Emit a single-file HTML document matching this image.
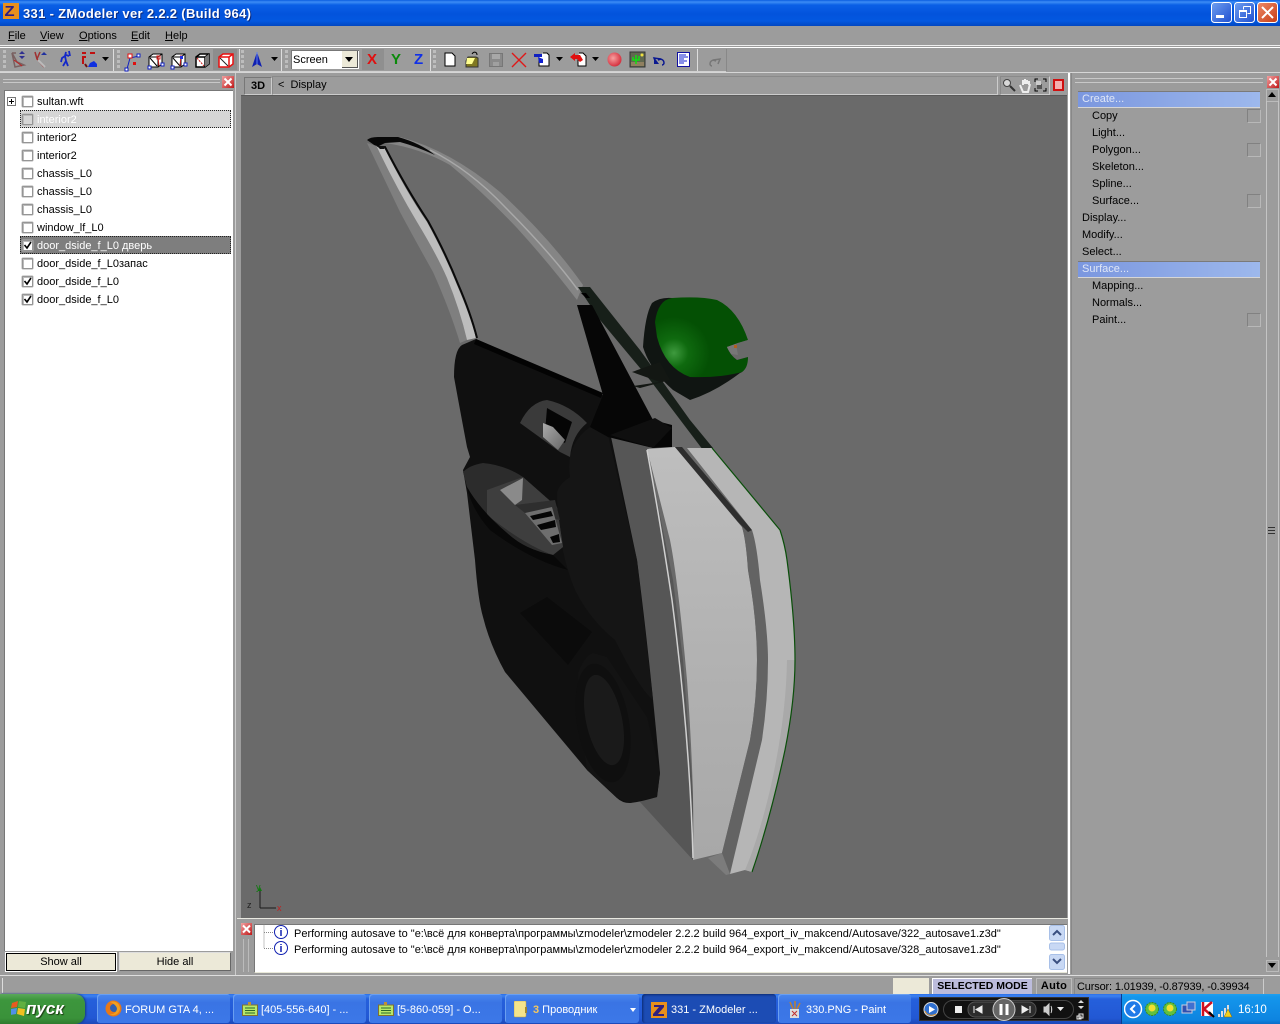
<!DOCTYPE html>
<html><head><meta charset="utf-8"><title>331 - ZModeler</title>
<style>
html,body{margin:0;padding:0;width:1280px;height:1024px;overflow:hidden;background:#9c9c9c}
body{position:relative;font:11px "Liberation Sans","Noto Sans CJK SC",sans-serif;color:#000}
.a{position:absolute}
.t{position:absolute;white-space:nowrap;line-height:14px}
.cb{position:absolute;left:22px;width:9px;height:9px;border:1px solid #959595;box-shadow:inset 1px 1px 0 #bbb,0 0 0 .5px #b0b0b0;border-radius:1px;background:#fff}
.tb{position:absolute;top:994px;height:29px;border-radius:3px;background:linear-gradient(#4a88ee,#3a74e4 30%,#3c78e8);box-shadow:inset 1px 1px 0 #6a9ff0;color:#fff;font-size:11px;line-height:32px;white-space:nowrap}
.hd{position:absolute;left:1078px;width:182px;height:15px;background:linear-gradient(90deg,#7b97df,#9db8ec);border-top:1px solid #7a7a7a;border-bottom:1px solid #d6d6d6;color:#dfe6f6;line-height:15px;text-indent:4px}
.sq{position:absolute;left:1247px;width:12px;height:12px;border:1px solid #818181;border-right-color:#b8b8b8;border-bottom-color:#b8b8b8}
.ln{position:absolute;background:#fff}
.grip{position:absolute;top:50px;width:3px;height:20px;background:repeating-linear-gradient(#bdbdbd 0 3px,transparent 3px 5px)}
</style></head><body>

<!-- title bar -->
<div class="a" style="left:0;top:0;width:1280px;height:26px;background:linear-gradient(#0a5ee0 0,#3d8cf5 2px,#0a5fe6 5px,#0353dc 14px,#0358e0 21px,#0246c0 26px)"></div>
<div class="a" style="left:3px;top:3px;width:16px;height:16px;background:#e8901c"></div>
<div class="t" style="left:5px;top:4px;font:bold 15px/15px 'Liberation Sans',sans-serif;color:#302080;transform:scaleX(1.1)">Z</div>
<div class="t" style="left:23px;top:7px;color:#fff;font-weight:bold;font-size:13px;letter-spacing:.32px;text-shadow:1px 1px 0 #0a2a80">331 - ZModeler ver 2.2.2 (Build 964)</div>
<svg class="a" style="left:1210px;top:1px" width="70" height="24">
<defs><linearGradient id="bl" x1="0" y1="0" x2="1" y2="1"><stop offset="0" stop-color="#6f9ff0"/><stop offset="1" stop-color="#1f4fd0"/></linearGradient>
<linearGradient id="rd" x1="0" y1="0" x2="1" y2="1"><stop offset="0" stop-color="#ec8a68"/><stop offset="1" stop-color="#c83c14"/></linearGradient>
<radialGradient id="ball" cx=".4" cy=".4" r=".7"><stop offset="0" stop-color="#f8a0a0"/><stop offset="1" stop-color="#d02030"/></radialGradient></defs>
<rect x="1.500" y="1.500" width="20" height="20" rx="3" fill="url(#bl)" stroke="#fff"/>
<rect x="6" y="14" width="8" height="3" fill="#fff"/>
<rect x="24.500" y="1.500" width="20" height="20" rx="3" fill="url(#bl)" stroke="#fff"/>
<path d="M33.500 5.500h7v7h-3M33.500 5.500v3M29.500 9.500h7v7h-7z M29.500 10.500h7" fill="none" stroke="#fff"/>
<rect x="47.500" y="1.500" width="20" height="20" rx="3" fill="url(#rd)" stroke="#fff"/>
<path d="M52 6l11 11M63 6L52 17" stroke="#fff" stroke-width="2"/>
</svg>

<!-- menu -->
<div class="t" style="left:8px;top:29px;"><u>F</u>ile</div>
<div class="t" style="left:40px;top:29px;"><u>V</u>iew</div>
<div class="t" style="left:79px;top:29px;"><u>O</u>ptions</div>
<div class="t" style="left:131px;top:29px;"><u>E</u>dit</div>
<div class="t" style="left:165px;top:29px;"><u>H</u>elp</div>
<div class="ln" style="left:0;top:45px;width:1280px;height:1px;background:#eee"></div>
<div class="ln" style="left:0;top:47px;width:1280px;height:1px"></div>

<!-- toolbar -->
<div class="ln" style="left:113px;top:49px;width:1px;height:22px;background:#ddd"></div>
<div class="ln" style="left:239px;top:49px;width:1px;height:22px;background:#ddd"></div>
<div class="ln" style="left:281px;top:49px;width:1px;height:22px;background:#ddd"></div>
<div class="ln" style="left:430px;top:49px;width:1px;height:22px;background:#ddd"></div>
<div class="ln" style="left:697px;top:49px;width:1px;height:22px;background:#ddd"></div>
<div class="ln" style="left:726px;top:49px;width:1px;height:22px;background:#888"></div>
<div class="ln" style="left:0;top:71px;width:726px;height:1px;background:#d0d0d0"></div>
<div class="grip" style="left:3px"></div><div class="grip" style="left:117px"></div><div class="grip" style="left:241px"></div><div class="grip" style="left:285px"></div><div class="grip" style="left:433px"></div>
<div class="a" style="left:213px;top:49px;width:24px;height:21px;background:#8d8d8d"></div>

<div class="a" style="left:291px;top:50px;width:67px;height:18px;background:#fff;border-top:1px solid #777;border-left:1px solid #777"></div>
<div class="t" style="left:293px;top:53px;">Screen</div>
<div class="a" style="left:342px;top:51px;width:15px;height:16px;background:#ece9d8;border-right:1px solid #555;border-bottom:1px solid #555"></div>
<div class="a" style="left:345px;top:57px;border:4px solid transparent;border-top:5px solid #000"></div>
<div class="a" style="left:362px;top:49px;width:22px;height:21px;background:#8f8f8f"></div>
<div class="t" style="left:367px;top:52px;font:bold 15px/15px 'Liberation Sans',sans-serif;color:#e01010">X</div>
<div class="t" style="left:391px;top:52px;font:bold 15px/15px 'Liberation Sans',sans-serif;color:#0a8a0a">Y</div>
<div class="t" style="left:414px;top:52px;font:bold 15px/15px 'Liberation Sans',sans-serif;color:#1030e8">Z</div>

<svg class="a" style="left:0;top:48px" width="730" height="24" fill="none">
<path d="M12 5l5 9 7 3-9 2zM12 5h4" stroke="#7a6060" stroke-width="1.500"/><path d="M19 6h6l-3-3zM19 8h6l-3 3z" fill="#303090"/><path d="M14 12l8 6" stroke="#c02020"/>
<path d="M35 4l2 7 7 8M40 4l-3 7" stroke="#a03030" stroke-width="1.500"/><path d="M41 7h6l-3-3z" fill="#2030a0"/><path d="M38 12l7 7" stroke="#bbb" stroke-width="2"/>
<path d="M66 4l-1 4-3 2-1 4M65 8l1 5-3 5M66 13l2 5M66 7l3 1M69 3l1 5" stroke="#1428c8" stroke-width="1.800"/>
<path d="M82 5h4M82 9h4M83 9v7M90 5h5" stroke="#c01010" stroke-width="2"/><path d="M88 19l2-4 4-2 3 3v3z" fill="#1030e0"/><path d="M85 16l2 3" stroke="#701010" stroke-width="2"/>
<path d="M102 9h7l-3.500 4z" fill="#000"/>
<path d="M127 21l3-11 9-2" stroke="#1020c0"/><rect x="128" y="6" width="4" height="4" fill="#fff" stroke="#e01010"/><rect x="137" y="6" width="3" height="3" fill="#fff" stroke="#1020c0"/><rect x="125" y="20" width="3" height="3" fill="#fff" stroke="#1020c0"/><rect x="133" y="14" width="3" height="3" fill="#e01010"/>
<path d="M149 9l4-3h9v10l-4 3h-9zM149 9h9v10M158 9l4-3M150 10l7 8" fill="#fff" stroke="#000"/><path d="M158 8l1 10" stroke="#d02020"/><rect x="157" y="8" width="3" height="3" stroke="#d02020"/><rect x="161" y="15" width="3" height="3" stroke="#1020c0" fill="#fff"/><rect x="148" y="18" width="3" height="3" stroke="#1020c0" fill="#fff"/>
<path d="M172 9l4-3h9v10l-4 3h-9zM172 9h9v10M181 9l4-3M173 10l7 8" fill="#fff" stroke="#000"/><path d="M181 7l-1 11" stroke="#d02020"/><rect x="180" y="8" width="3" height="3" fill="#2030e0"/><rect x="184" y="15" width="3" height="3" stroke="#1020c0" fill="#fff"/><rect x="171" y="18" width="3" height="3" stroke="#1020c0" fill="#fff"/>
<path d="M196 9l4-3h9v10l-4 3h-9zM196 9h9v10M205 9l4-3" fill="#fff" stroke="#000" stroke-width="1.500"/><path d="M205 9l4-3v10l-4 3z" fill="#777"/><path d="M197 10l7 8" stroke="#d02020" stroke-dasharray="2 1"/>
<path d="M219 9l4-3h10v10l-4 3h-10zM219 9h10v10M229 9l4-3" fill="#fff" stroke="#e81010" stroke-width="1.500"/><path d="M220 10l8 8" stroke="#222"/>
<path d="M252 19l5-15 5 15-5-3z" fill="#1020b0"/><path d="M257 4v12" stroke="#6080f0"/>
<path d="M271 9h7l-3.500 4z" fill="#000"/>
<path d="M445 5h7l3 3v10h-10z" fill="#fff" stroke="#000"/>
<path d="M466 13l2-4h8l2 1v9h-12z" fill="#807820" stroke="#333"/><path d="M467 10h8l-3 6h-6z" fill="#ffff90"/><path d="M472 6c2-3 5-2 5 1" stroke="#000"/>
<rect x="489.500" y="5.500" width="13" height="13" fill="#8a8a8a" stroke="#777"/><rect x="492" y="6" width="8" height="5" fill="#a8a8a8"/><rect x="493" y="14" width="6" height="4" fill="#a0a0a0"/>
<path d="M512 5l14 14M526 5l-14 14" stroke="#e01818" stroke-width="1.400"/>
<path d="M543 5h4l2 2v11h-10v-8" fill="#fff" stroke="#000"/><rect x="534" y="6" width="8" height="3" fill="#1020c0"/><path d="M538 9l5 2v4h-4z" fill="#1020d0"/>
<path d="M556 9h7l-3.500 4z" fill="#000"/>
<path d="M579 5h4l3 3v10h-8v-8" fill="#fff" stroke="#000"/><path d="M570 9l5-4v2h5l3 5-3 2-3-3h-2v2z" fill="#e01010"/>
<path d="M592 9h7l-3.500 4z" fill="#000"/>
<circle cx="614.500" cy="11.500" r="7" fill="url(#ball)"/>
<rect x="630" y="4" width="15" height="15" fill="#606850" stroke="#333"/><path d="M631 14h13v4h-13z" fill="#908060"/><path d="M636 7v9M633 9v3h6v-4" stroke="#10e010" stroke-width="1.500"/><circle cx="642" cy="7" r="1.500" fill="#f0e040"/>
<path d="M656 15l-2-5 7 1-3 1c3-2 6 0 6 3 0 1-1 2-2 2" stroke="#0a1890" stroke-width="1.500"/><path d="M654 9v7h5z" fill="#0a1890"/>
<rect x="677.500" y="4.500" width="12" height="14" fill="#fff" stroke="#1010a0"/><path d="M679 7h7M679 9h9M679 11h5M679 13h8M679 15h5" stroke="#1020d0"/>
<path d="M718 16l2-5-7 1 3 1c-3-2-6 0-6 3 0 1 1 2 2 2" stroke="#777" stroke-width="1.500"/>
</svg>

<!-- left panel -->
<div class="a" style="left:235px;top:73px;width:1px;height:903px;background:#ccc"></div>
<div class="a" style="left:0;top:72px;width:1280px;height:1px;background:#d6d6d6"></div>
<div class="a" style="left:3px;top:79px;width:217px;height:1px;background:#c8c8c8"></div>
<div class="a" style="left:3px;top:82px;width:217px;height:1px;background:#c8c8c8"></div>
<svg class="a" style="left:222px;top:76px" width="12" height="12"><defs><linearGradient id="xb" x1="0" y1="0" x2="1" y2="1"><stop offset="0" stop-color="#f0a0a0"/><stop offset="1" stop-color="#c01818"/></linearGradient></defs><rect width="12" height="12" fill="url(#xb)"/><path d="M2.500 2.500l7 7M9.500 2.500l-7 7" stroke="#fff" stroke-width="2"/></svg>
<div class="a" style="left:4px;top:90px;width:228px;height:860px;background:#fff;border-top:1px solid #777;border-left:1px solid #777"></div>
<div class="a" style="left:7px;top:97px;width:7px;height:7px;border:1px solid #777;background:#fff"></div>
<div class="a" style="left:9px;top:101px;width:5px;height:1px;background:#000"></div>
<div class="a" style="left:11px;top:99px;width:1px;height:5px;background:#000"></div>

<div class="a" style="left:20px;top:110px;width:209px;height:16px;background:#d6d6d6;border:1px dotted #222"></div>
<div class="a" style="left:20px;top:236px;width:209px;height:16px;background:#7e7e7e;border:1px dotted #222"></div>

<div class="cb" style="top:96px"></div><div class="t" style="left:37px;top:95px">sultan.wft</div>
<div class="cb" style="top:114px;background:#d6d6d6"></div><div class="t" style="left:37px;top:113px;color:#fff">interior2</div>
<div class="cb" style="top:132px"></div><div class="t" style="left:37px;top:131px">interior2</div>
<div class="cb" style="top:150px"></div><div class="t" style="left:37px;top:149px">interior2</div>
<div class="cb" style="top:168px"></div><div class="t" style="left:37px;top:167px">chassis_L0</div>
<div class="cb" style="top:186px"></div><div class="t" style="left:37px;top:185px">chassis_L0</div>
<div class="cb" style="top:204px"></div><div class="t" style="left:37px;top:203px">chassis_L0</div>
<div class="cb" style="top:222px"></div><div class="t" style="left:37px;top:221px">window_lf_L0</div>
<div class="cb" style="top:240px"></div><div class="t" style="left:37px;top:239px;color:#fff">door_dside_f_L0 дверь</div>
<div class="cb" style="top:258px"></div><div class="t" style="left:37px;top:257px">door_dside_f_L0запас</div>
<div class="cb" style="top:276px"></div><div class="t" style="left:37px;top:275px">door_dside_f_L0</div>
<div class="cb" style="top:294px"></div><div class="t" style="left:37px;top:293px">door_dside_f_L0</div>
<svg class="a" style="left:22px;top:96px" width="12" height="212" fill="none" stroke="#000" stroke-width="1.600"><path d="M2.500 149l2.500 3 4-6M2.500 185l2.500 3 4-6M2.500 203l2.500 3 4-6"/></svg>

<div class="a" style="left:6px;top:953px;width:108px;height:16px;background:#ece9d8;border:1px solid #000;outline:1px solid #fff;text-align:center;line-height:17px">Show all</div>
<div class="a" style="left:120px;top:953px;width:110px;height:17px;background:#ece9d8;border-right:1px solid #666;border-bottom:1px solid #666;box-shadow:-1px -1px 0 #ddd;text-align:center;line-height:18px">Hide all</div>

<!-- 3D viewport header -->
<div class="a" style="left:244px;top:77px;width:26px;height:16px;border:1px solid #777;border-right-color:#ccc;border-bottom-color:#ccc;text-align:center;font:bold 11px/16px 'Liberation Sans',sans-serif">3D</div>
<div class="a" style="left:272px;top:76px;width:724px;height:17px;border:1px solid #8a8a8a;border-right-color:#ccc;border-bottom-color:#ccc"></div>
<div class="t" style="left:278px;top:78px">&lt;&nbsp; Display</div>
<div class="a" style="left:1000px;top:76px;width:48px;height:17px;border:1px solid #8a8a8a;border-right-color:#ccc;border-bottom-color:#ccc"></div>
<svg class="a" style="left:1000px;top:76px" width="66" height="18" fill="none">
<circle cx="7" cy="7" r="3.500" fill="#d8d8d8" stroke="#444"/><path d="M10 10l5 5" stroke="#333" stroke-width="2"/>
<path d="M20 9l3 7h5l2-8M23 9V4M25 8V3M27 8V4M29 9V5" stroke="#eee" stroke-width="2"/>
<path d="M35 6V3h3M43 3h3v3M35 12v3h3M46 12v3h-3" stroke="#000"/><rect x="37" y="8" width="5" height="5" fill="#555"/><rect x="36" y="5" width="5" height="4" fill="#ccc"/>
<rect x="54" y="4" width="9" height="10" fill="#f4b0b0" stroke="#d01010" stroke-width="2"/>
</svg>

<!-- viewport -->
<div class="a" style="left:241px;top:95px;width:826px;height:822px;background:#6a6a6a;border-top:1px solid #5a5a5a"></div>
<svg class="a" style="left:0;top:0" width="1280" height="1024" viewBox="0 0 1280 1024">
<defs>
<radialGradient id="gr" gradientUnits="userSpaceOnUse" cx="674" cy="353" r="36"><stop offset="0" stop-color="#3e9a3e"/><stop offset=".4" stop-color="#0f6a0f"/><stop offset="1" stop-color="#045004"/></radialGradient>
<linearGradient id="wh" x1="0" y1="0" x2="0" y2="1"><stop offset="0" stop-color="#bebebe"/><stop offset=".5" stop-color="#b2b2b2"/><stop offset="1" stop-color="#a8a8a8"/></linearGradient>
<linearGradient id="hl" x1="0" y1="0" x2="1" y2="1"><stop offset="0" stop-color="#aaa"/><stop offset="1" stop-color="#666"/></linearGradient>
</defs>
<!-- upper arc -->
<path d="M400 137Q450 150 500 192Q550 238 583 285L577 300Q548 262 517 228Q483 192 450 165Q420 148 385 143Z" fill="#858585"/>
<path d="M430 150Q470 170 505 207Q550 252 578 290" stroke="#a8a8a8" stroke-width="1.500" fill="none"/>
<path d="M367 140Q370 137 378 137L398 137Q420 143 435 155Q415 146 400 142L385 143L377 147Z" fill="#080808"/>
<!-- left frame -->
<path d="M367 143L377 146Q395 185 417 222Q437 255 447 278Q460 310 467 340L460 343Q450 310 433 272Q415 240 400 212Z" fill="#7f7f7f"/>
<path d="M377 147L384 147Q405 190 427 222Q445 255 457 285Q470 315 476 338L467 340Q460 310 447 278Q437 255 417 222Q395 185 377 147Z" fill="#bdbdbd"/>
<path d="M385 147Q406 188 428 221Q446 254 458 284Q471 314 477 338" fill="none" stroke="#0a0a0a" stroke-width="2"/>
<path d="M377 146L386 146 384 149 380 149Z" fill="#111"/>
<!-- slim strip -->
<path d="M578 287L590 287 640 350 690 420 713 448 703 450 650 380 600 320Z" fill="#171f19"/>
<path d="M581 293l5 0 4 5-4 0z" fill="#000"/>
<!-- grey side panel -->
<path d="M608 432L653 445 647 450 673 580 683 660 693 793 693 860 640 802 620 780 637 560Z" fill="#565656"/>
<!-- door body -->
<path d="M462 345L476 339 603 395 610 432 637 560Q650 660 660 773L657 797Q640 802 630 803Q622 803 617 798L587 770 505 672Q490 645 483 617Q478 600 475 560L467 493 463 470 470 457 467 447Q460 410 454 377Q454 350 462 345Z" fill="#101010"/>
<path d="M476 339L603 393 601 398 474 344Z" fill="#030303"/>
<path d="M557 493Q558 485 570 477Q565 445 590 427L608 435 637 560 653 700Q640 690 615 640Q590 620 575 590Q558 550 557 493Z" fill="#151515"/>
<path d="M520 613L547 597 592 632 568 665Z" fill="#0b0b0b"/>
<!-- speaker -->
<path d="M578 673Q585 655 593 653L607 657 647 717 660 773 657 797 630 803 617 798 587 770Q580 720 578 673Z" fill="#131313"/>
<ellipse cx="603" cy="723" rx="26" ry="60" transform="rotate(-10 603 723)" fill="#0f0f0f"/>
<ellipse cx="604" cy="720" rx="18" ry="46" transform="rotate(-12 604 720)" fill="#1a1a1a"/>
<!-- handle -->
<path d="M520 423Q530 402 547 400Q570 405 587 423Q572 435 570 457L560 452Z" fill="#3a3a3a"/>
<path d="M547 408L572 422 565 443 545 432Z" fill="#050505"/>
<path d="M543 423L553 427 565 440 558 450 543 437Z" fill="url(#hl)"/>
<!-- armrest -->
<path d="M463 472Q470 465 483 463Q505 465 523 477L557 507 563 547 553 555Q525 550 507 533Q480 510 467 487Z" fill="#2c2c2c"/>
<path d="M487 490L523 477 557 507 563 547 553 555Q525 545 487 515Z" fill="#3e3e3e"/>
<path d="M500 490L523 478 522 500 515 505Z" fill="#8a8a8a"/>
<path d="M515 505L555 500 560 520 525 513Z" fill="#2e2e2e"/>
<path d="M525 513L552 507 562 543 552 545Z" fill="#6e6e6e"/>
<path d="M530 516L551 511 553 516 533 520zM537 525L555 520 556 527 541 530zM550 537L559 534 560 542 553 543z" fill="#050505"/>
<path d="M467 487Q480 510 507 533Q525 550 553 555L568 570Q530 560 490 530Q472 510 467 487Z" fill="#080808"/>
<!-- top black trim -->
<path d="M577 305L592 305 653 420 672 425 672 447 653 448 608 437 590 427 603 395Z" fill="#060606"/>
<path d="M610 435L655 418 672 428 668 432 653 448Z" fill="#0f0f0f"/>
<!-- white panel -->
<path d="M647 449L675 447 742 527Q746 540 748 570Q757 620 757 660Q757 700 750 740L722 853 693 860Q695 790 687 680Q678 580 670 540Z" fill="url(#wh)"/>
<path d="M647 450Q660 520 672 600Q690 740 693 858" fill="none" stroke="#d0d0d0" stroke-width="1.500"/>
<!-- stripe -->
<path d="M675 447L682 447 752 530Q757 545 760 580Q768 630 768 660Q768 700 762 740L733 860 730 874 722 853 750 740Q757 700 757 660Q757 620 748 570Q746 540 742 527Z" fill="#636363"/>
<path d="M675 447L682 447 752 530 748 532 738 522Z" fill="#2e2e2e"/>
<path d="M722 853L730 874 726 875 708 858Z" fill="#7c7c7c"/>
<!-- outer strip -->
<path d="M687 448L712 448 780 530Q785 545 787 560Q795 620 795 660Q795 700 785 750Q770 820 752 872L745 870 730 874 762 740Q768 700 768 660Q768 630 760 580Q757 545 752 530Z" fill="#b6b6b6"/>
<path d="M787 660Q786 720 770 790Q758 840 745 870L752 872Q770 820 785 750Q795 700 795 660Z" fill="#a9a9a9"/>
<path d="M712 448L780 530Q785 545 787 560Q795 620 795 660Q795 700 785 750Q770 820 752 872" fill="none" stroke="#0a4f0a" stroke-width="1.200"/>
<!-- mirror -->
<path d="M643 347Q645 315 652 303Q660 297 672 298L700 340 748 357Q745 372 740 373Q715 392 690 400L673 390Q650 370 643 347Z" fill="#101512"/>
<path d="M632 372L660 362 670 380 640 388 633 386 660 382Z" fill="#131713"/>
<path d="M655 322Q658 300 672 298Q700 296 717 300Q738 310 748 340L738 343 727 347Q730 355 737 360L748 357Q748 368 742 372Q720 378 690 377Q665 368 657 337Z" fill="url(#gr)"/>
<path d="M727 347L738 343 748 340 748 357 737 360Q730 355 727 347Z" fill="#6a6a6a"/>
<path d="M727 347L736 344 738 355 731 354Z" fill="#777"/>
<path d="M734 345l3 0 0 3-3 0z" fill="#b06020"/>
<!-- axis gizmo -->
<path d="M260 888V908M260 908H276" stroke="#1a1a1a" stroke-width="1"/>
<path d="M260 887l-2 4h4z" fill="#0f7a0f"/>
<text x="256" y="890" font-size="9" fill="#0f7a0f" font-family="Liberation Sans">y</text>
<text x="247" y="908" font-size="9" fill="#222" font-family="Liberation Sans">z</text>
<text x="277" y="911" font-size="9" fill="#c02020" font-family="Liberation Sans">x</text>
</svg>

<!-- log panel -->
<div class="a" style="left:237px;top:918px;width:831px;height:1px;background:#e8e8e0"></div>
<svg class="a" style="left:240px;top:922px" width="13" height="50"><rect x="1" y="1" width="11" height="12" fill="url(#xb)"/><path d="M3 3.500l7 7M10 3.500l-7 7" stroke="#fff" stroke-width="2"/><path d="M3.500 17v34M8.500 17v34" stroke="#bbb"/></svg>
<div class="a" style="left:254px;top:924px;width:812px;height:47px;background:#fff;border-top:1px solid #777;border-left:1px solid #777;border-bottom:1px solid #e8e8d8"></div>
<svg class="a" style="left:263px;top:924px" width="30" height="34" fill="none"><path d="M1 .500v24M1 8.500h9M1 24.500h9" stroke="#888" stroke-dasharray="1 1"/><circle cx="18" cy="8" r="6.500" fill="#fff" stroke="#1020b0"/><circle cx="18" cy="24" r="6.500" fill="#fff" stroke="#1020b0"/><path d="M18 4v1M18 6v6M18 20v1M18 22v6" stroke="#1020b0" stroke-width="1.500"/></svg>
<div class="t" style="left:294px;top:927px;font-size:11px">Performing autosave to "e:\всё для конверта\программы\zmodeler\zmodeler 2.2.2 build 964_export_iv_makcend/Autosave/322_autosave1.z3d"</div>
<div class="t" style="left:294px;top:943px;font-size:11px">Performing autosave to "e:\всё для конверта\программы\zmodeler\zmodeler 2.2.2 build 964_export_iv_makcend/Autosave/328_autosave1.z3d"</div>
<svg class="a" style="left:1049px;top:925px" width="16" height="46" fill="none">
<rect x=".5" y=".5" width="15" height="15" rx="2" fill="#c8d8f4" stroke="#a8c0e8"/><path d="M4 10l4-4 4 4" stroke="#3a4f80" stroke-width="2"/>
<rect x=".5" y="18" width="15" height="7" rx="2" fill="#c8d8f4" stroke="#a8c0e8"/>
<rect x=".5" y="29.500" width="15" height="15" rx="2" fill="#c8d8f4" stroke="#a8c0e8"/><path d="M4 34l4 4 4-4" stroke="#3a4f80" stroke-width="2"/>
</svg>

<!-- right panel -->
<div class="a" style="left:1068px;top:73px;width:2px;height:901px;background:#fff"></div>
<div class="a" style="left:1071px;top:73px;width:1px;height:901px;background:#888"></div>
<div class="a" style="left:1075px;top:78px;width:188px;height:1px;background:#c8c8c8"></div>
<div class="a" style="left:1075px;top:82px;width:188px;height:1px;background:#c8c8c8"></div>
<svg class="a" style="left:1267px;top:76px" width="12" height="12"><rect width="12" height="12" fill="url(#xb)"/><path d="M2.500 2.500l7 7M9.500 2.500l-7 7" stroke="#fff" stroke-width="2"/></svg>
<div class="a" style="left:1266px;top:89px;width:11px;height:11px;border:1px solid #bbb"></div>
<div class="a" style="left:1268px;top:92px;border:4px solid transparent;border-bottom:5px solid #000;border-top:0"></div>
<div class="a" style="left:1266px;top:101px;width:1px;height:856px;background:#c4c4c4"></div>
<div class="a" style="left:1278px;top:101px;width:1px;height:856px;background:#c4c4c4"></div>
<div class="a" style="left:1268px;top:527px;width:7px;height:8px;background:repeating-linear-gradient(#333 0 1px,transparent 1px 3px)"></div>
<div class="a" style="left:1266px;top:960px;width:11px;height:10px;border:1px solid #bbb"></div>
<div class="a" style="left:1268px;top:963px;border:4px solid transparent;border-top:5px solid #000;border-bottom:0"></div>

<div class="hd" style="top:91px">Create...</div>
<div class="t" style="left:1092px;top:109px">Copy</div><div class="sq" style="top:109px"></div>
<div class="t" style="left:1092px;top:126px">Light...</div>
<div class="t" style="left:1092px;top:143px">Polygon...</div><div class="sq" style="top:143px"></div>
<div class="t" style="left:1092px;top:160px">Skeleton...</div>
<div class="t" style="left:1092px;top:177px">Spline...</div>
<div class="t" style="left:1092px;top:194px">Surface...</div><div class="sq" style="top:194px"></div>
<div class="t" style="left:1082px;top:211px">Display...</div>
<div class="t" style="left:1082px;top:228px">Modify...</div>
<div class="t" style="left:1082px;top:245px">Select...</div>
<div class="hd" style="top:261px">Surface...</div>
<div class="t" style="left:1092px;top:279px">Mapping...</div>
<div class="t" style="left:1092px;top:296px">Normals...</div>
<div class="t" style="left:1092px;top:313px">Paint...</div><div class="sq" style="top:313px"></div>

<!-- status bar -->
<div class="a" style="left:0;top:975px;width:1280px;height:1px;background:#ddd"></div>
<div class="a" style="left:2px;top:978px;width:1px;height:15px;background:#ddd"></div>
<div class="a" style="left:893px;top:978px;width:36px;height:16px;background:#ece9d8"></div>
<div class="a" style="left:932px;top:978px;width:99px;height:15px;background:#bcbcdc;border-top:1px solid #fff;border-left:1px solid #fff;text-align:center;font:bold 10.500px/15px 'Liberation Sans',sans-serif">SELECTED MODE</div>
<div class="a" style="left:1036px;top:978px;width:34px;height:15px;border:1px solid #bbb;text-align:center;font:bold 11px/15px 'Liberation Sans',sans-serif;letter-spacing:.3px">Auto</div>
<div class="a" style="left:1074px;top:978px;width:188px;height:15px;border:1px solid #888;border-right-color:#ccc;border-bottom-color:#ccc"></div>
<div class="t" style="left:1077px;top:980px;letter-spacing:-.16px">Cursor: 1.01939, -0.87939, -0.39934</div>

<!-- taskbar -->
<div class="a" style="left:0;top:994px;width:1280px;height:30px;background:linear-gradient(#2a6fe8 0,#3c82f0 2px,#2560dc 5px,#2258d4 24px,#1c48b8 30px)"></div>
<div class="a" style="left:1121px;top:994px;width:159px;height:30px;background:linear-gradient(#1ea0f0 0,#1496ec 3px,#0e84e0 26px,#0c6cc8 30px);border-left:1px solid #0a3c90"></div>
<div class="a" style="left:0;top:994px;width:85px;height:30px;background:linear-gradient(#5aa85a,#3d963d 20%,#3a923a 80%,#2e7a2e);border-radius:0 10px 10px 0;box-shadow:1px 0 2px #143a80"></div>
<svg class="a" style="left:11px;top:1000px" width="17" height="17"><path d="M1 3l6-2-1 6-6 1z" fill="#e85a20"/><path d="M8 1l7 1-1 6-7-1z" fill="#60b040"/><path d="M0 9l6-1-1 6-6 1z" fill="#5090e8"/><path d="M7 8l7 1-1 7-7-2z" fill="#f0c020"/></svg>
<div class="t" style="left:26px;top:1000px;color:#fff;font:italic bold 17px/18px 'Liberation Sans',sans-serif;text-shadow:1px 1px 1px #1a3a10">пуск</div>

<div class="tb" style="left:97px;width:133px;text-indent:28px">FORUM GTA 4, ...</div>
<div class="tb" style="left:233px;width:133px;text-indent:28px">[405-556-640] - ...</div>
<div class="tb" style="left:369px;width:133px;text-indent:28px">[5-860-059] - O...</div>
<div class="tb" style="left:505px;width:134px;text-indent:28px"><b style="color:#f4c860">3</b> Проводник</div>
<div class="tb" style="left:642px;width:134px;text-indent:29px;background:#1c4cb4;box-shadow:inset 1px 1px 2px #0c2a70">331 - ZModeler ...</div>
<div class="tb" style="left:778px;width:133px;text-indent:28px">330.PNG - Paint</div>
<div class="a" style="left:630px;top:1008px;border:3px solid transparent;border-top:4px solid #fff"></div>
<svg class="a" style="left:105px;top:1000px" width="18" height="18"><circle cx="8.500" cy="8.500" r="8" fill="#e87818"/><circle cx="9" cy="8" r="4" fill="#3060b0"/><path d="M5 2c6-2 10 2 10 7-1 5-6 8-11 5 4 1 7-1 8-5 0-3-4-6-7-7z" fill="#f0a020"/></svg>
<svg class="a" style="left:242px;top:1002px" width="16" height="15"><rect x=".5" y="3" width="15" height="10.500" fill="#b8e868" stroke="#807030"/><rect x="6" y="0" width="3" height="3" fill="#c09030"/><path d="M3 6h10M3 8.500h10M3 11h10" stroke="#2a6a2a"/></svg>
<svg class="a" style="left:378px;top:1002px" width="16" height="15"><rect x=".5" y="3" width="15" height="10.500" fill="#b8e868" stroke="#807030"/><rect x="6" y="0" width="3" height="3" fill="#c09030"/><path d="M3 6h10M3 8.500h10M3 11h10" stroke="#2a6a2a"/></svg>
<svg class="a" style="left:514px;top:1001px" width="15" height="17"><rect x="0" y="0" width="12" height="16" rx="1" fill="#f4e48c" stroke="#c0a040" stroke-width=".5"/><rect x="11" y="6" width="2" height="6" fill="#a08830"/></svg>
<svg class="a" style="left:651px;top:1002px" width="16" height="16"><rect width="16" height="16" fill="#e8901c"/><path d="M3 3h10v2L7 12h6v2H2v-2l6-7H3z" fill="#302080"/></svg>
<svg class="a" style="left:787px;top:1001px" width="15" height="18" fill="none"><path d="M3 1l3 7M8 0v8M13 2l-3 6" stroke="#c08030" stroke-width="1.500"/><rect x="3" y="8" width="9" height="9" fill="#ddd"/><path d="M5 10l5 5M10 10l-5 5" stroke="#c03030"/></svg>

<!-- media player -->
<div class="a" style="left:919px;top:997px;width:170px;height:24px;background:#111;border:1px solid #333;box-sizing:border-box"></div>
<svg class="a" style="left:919px;top:997px" width="170" height="25" fill="none">
<circle cx="12" cy="12.500" r="7" fill="#3070d0" stroke="#ddd"/><path d="M10 9l6 3.500-6 3.500z" fill="#fff"/><path d="M6 14c2 5 8 5 11 3" stroke="#e09020"/>
<rect x="24.500" y="3.500" width="130" height="18" rx="9" stroke="#444"/>
<rect x="36" y="9" width="7" height="7" fill="#eee"/>
<rect x="49" y="5" width="68" height="15" rx="7" fill="#2c2c2c" stroke="#555"/>
<path d="M55 9v7M63 9l-6 3.500 6 3.500z" stroke="#eee" fill="#eee"/>
<path d="M111 9v7M103 9l6 3.500-6 3.500z" stroke="#eee" fill="#eee"/>
<circle cx="85" cy="12.500" r="11" fill="#666" stroke="#ccc"/>
<path d="M82 7v11M88 7v11" stroke="#fff" stroke-width="3"/>
<path d="M125 10h2l3-3v11l-3-3h-2zM132 9c1 2 1 5 0 7" fill="#ccc" stroke="#ccc"/><path d="M138 10h7l-3.500 4z" fill="#eee"/>
<path d="M159 6l3-3 3 3zM159 9l3 3 3-3z" fill="#ddd"/><rect x="160" y="17" width="4" height="4" stroke="#eee"/><rect x="158" y="19" width="4" height="3" stroke="#eee"/>
</svg>

<!-- tray -->
<svg class="a" style="left:1124px;top:999px" width="92" height="22" fill="none">
<circle cx="9" cy="10" r="8.500" fill="#1f7ae8" stroke="#fff" stroke-width="1.500"/><path d="M11 6l-4 4 4 4" stroke="#fff" stroke-width="2"/>
<circle cx="28" cy="10" r="6.500" fill="#60c040" stroke="#3a8a20" stroke-dasharray="2 1"/><circle cx="28" cy="9" r="3.500" fill="#f0e030"/>
<circle cx="46" cy="10" r="6.500" fill="#60c040" stroke="#3a8a20" stroke-dasharray="2 1"/><circle cx="46" cy="9" r="3.500" fill="#f0e030"/>
<rect x="58" y="6" width="10" height="8" fill="#3050b0" stroke="#ccd"/><rect x="63" y="3" width="8" height="8" fill="#4070d0" stroke="#ccd"/>
<rect x="77" y="3" width="12" height="14" fill="#fff"/><path d="M79 3v14M88 3l-8 7 8 7" stroke="#d01020" stroke-width="2.500"/><path d="M85 13l5 5" stroke="#000" stroke-width="2"/>
</svg>
<svg class="a" style="left:1216px;top:1002px" width="16" height="16"><path d="M2 15h2v-3H2zM5 15h2V9H5zM8 15h2V6H8zM11 15h2V3h-2z" fill="#ddd"/><path d="M8 15l4-8 4 8z" fill="#f0d020" stroke="#806010" stroke-width=".5"/></svg>
<div class="t" style="left:1238px;top:1003px;color:#fff;font-size:11.500px">16:10</div>

</body></html>
